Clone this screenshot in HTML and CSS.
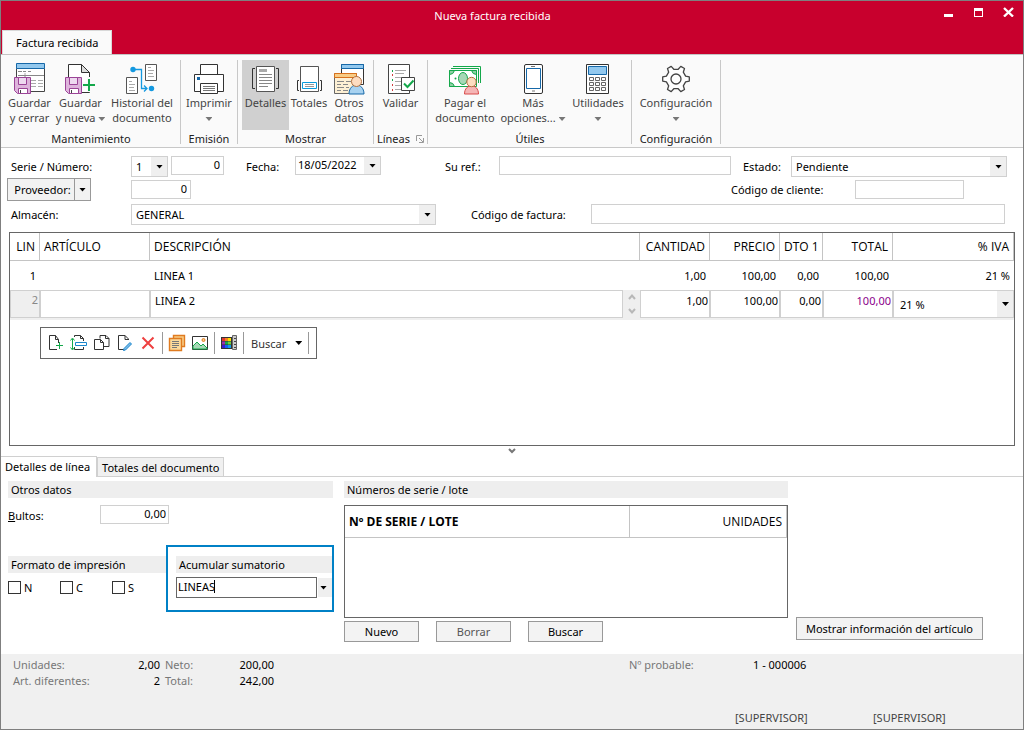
FILE: index.html
```html
<!DOCTYPE html>
<html lang="es">
<head>
<meta charset="utf-8">
<title>Nueva factura recibida</title>
<link rel="stylesheet" href="styles.css">
</head>
<body>
<div class="window">
  <header class="titlebar">
    <h1 class="title">Nueva factura recibida</h1>
    <div class="controls">
      <button class="ctl" aria-label="Minimizar"><svg width="11" height="11" viewBox="0 0 11 11"><path d="M1 8h9v3H1z" fill="#fff"/></svg></button>
      <button class="ctl" aria-label="Maximizar"><svg width="11" height="11" viewBox="0 0 11 11"><path d="M1 2h9v9H1zM2 5v5h7V5z" fill="#fff" fill-rule="evenodd"/></svg></button>
      <button class="ctl" aria-label="Cerrar"><svg width="11" height="11" viewBox="0 0 11 11"><path d="M1 2l9 8.500M10 2l-9 8.500" stroke="#fff" stroke-width="2.400"/></svg></button>
    </div>
    <button class="ribbon-tab">Factura recibida</button>
  </header>

  <nav class="ribbon">
    <section class="group g-save">
      <div class="tools">
        <button class="tool"><svg class="ico" viewBox="0 0 32 32"><path d="M3.500 5.500h28v23h-28z" fill="#fff" stroke="#444"/><path d="M3.500.500h28v5h-28z" fill="#92c8ee" stroke="#1668a8"/><path d="M5 8.500h4m1 0h3m2 0h3M5 12.500h26M12 12v5" stroke="#888"/><path d="M18 17.500h5m2 0h5M18 20.500h5m2 0h5M18 23.500h5m2 0h5M12 10v2" stroke="#aaa"/><path d="M1.500 14.500h16v16h-13l-3-3z" fill="#deb4dc" stroke="#9b4497"/><path d="M5.500 14.500h8v7h-8z" fill="#eedaf0" stroke="#9b4497"/><path d="M5.500 25.500h9v5h-9z" fill="#fff" stroke="#9b4497"/><path d="M7.500 27v3" stroke="#444"/></svg><span>Guardar<br>y cerrar</span></button>
        <button class="tool"><svg class="ico" viewBox="0 0 32 32"><path d="M4.500 1.500h13l8 8v20h-21z" fill="#fff" stroke="#333"/><path d="M17.500 1.500v8h8z" fill="#ddd" stroke="#333"/><path d="M1.500 14.500h16v16h-13l-3-3z" fill="#deb4dc" stroke="#9b4497"/><path d="M5.500 14.500h8v7h-8z" fill="#eedaf0" stroke="#9b4497"/><path d="M5.500 25.500h9v5h-9z" fill="#fff" stroke="#9b4497"/><path d="M7.500 27v3" stroke="#444"/><path d="M18 19h5v-5h4v5h5v6h-5v4h-4v-4h-5z" fill="#fafafa"/><path d="M19 22h12M25 16v12" stroke="#14a84b" stroke-width="2"/></svg><span>Guardar<br>y nueva <i class="caret"></i></span></button>
        <button class="tool wide"><svg class="ico" viewBox="0 0 32 32"><path d="M19.500 1.500h11v16h-11zM.500 14.500h11v16H.500z" fill="#fff" stroke="#555"/><path d="M22 4.500h3m-3 3h6m-6 3h5m-5 3h6M3 18.500h3m-3 3h6m-6 3h5m-5 3h6" stroke="#aaa"/><path d="M7 6.500h8.500v19H21M18 22.500l3 3-3 3" fill="none" stroke="#1499e0" stroke-width="1.300"/><circle cx="7" cy="6.500" r="2.700" fill="#1499e0"/><circle cx="25.500" cy="25.500" r="2.700" fill="#1499e0"/></svg><span>Historial del<br>documento</span></button>
      </div>
      <h2 class="group-name">Mantenimiento</h2>
    </section>
    <section class="group g-print">
      <div class="tools">
        <button class="tool"><svg class="ico" viewBox="0 0 32 32"><path d="M7.500 1.500h17v10h-17z" fill="#fff" stroke="#333"/><path d="M1.500 11.500h29v17h-29z" fill="#fff" stroke="#333"/><path d="M4 14h3v3H4z" fill="#1668a8"/><path d="M7.500 20.500h17v10h-17z" fill="#fff" stroke="#333"/><path d="M10 23.500h12m-12 2h12m-12 2h12" stroke="#777"/></svg><span>Imprimir<br><i class="caret"></i></span></button>
      </div>
      <h2 class="group-name">Emisión</h2>
    </section>
    <section class="group g-show">
      <div class="tools">
        <button class="tool active"><svg class="ico" viewBox="0 0 32 32"><path d="M6 5.500H3.500v20H6M27 5.500h2.500v20H27" fill="none" stroke="#333"/><path d="M7.500 3.500h18v25h-18z" fill="#fff" stroke="#555"/><path d="M10 6h8v3h-8z" fill="#aaa"/><path d="M10 11.500h13m-13 3h13m-13 3h13m-13 3h13m-13 3h9" stroke="#888"/></svg><span>Detalles</span></button>
        <button class="tool"><svg class="ico" viewBox="0 0 32 32"><path d="M6 17.500H4.500v10H6M27 17.500h1.500v10H27" fill="none" stroke="#333"/><path d="M7.500 3.500h18v25h-18z" fill="#fff" stroke="#555"/><path d="M9.500 19.500h14v6h-14z" fill="#fff" stroke="#0a9bdc"/><path d="M12 21.500h9m-9 2h9" stroke="#999"/></svg><span>Totales</span></button>
        <button class="tool"><svg class="ico" viewBox="0 0 32 32"><path d="M8.500 1.500h22v20h-22z" fill="#fff" stroke="#333"/><path d="M8.500 1.500h22v4h-22z" fill="#92c8ee" stroke="#1668a8"/><path d="M1.500 10.500h22v20h-22z" fill="#fdf0d4" stroke="#666"/><path d="M1.500 10.500h22v4h-22z" fill="#f8cc85" stroke="#d8711c"/><path d="M4 18.500h7m2 0h5m-14 3h4m2 0h5m-11 3h7m2 0h3m-12 3h4m2 0h5" stroke="#888"/><path d="M16 31c0-12 15-12 15 0z" fill="#a8d2f0" stroke="#1668a8"/><circle cx="23.500" cy="18.500" r="5" fill="#fddcc0" stroke="#b07040"/></svg><span>Otros<br>datos</span></button>
      </div>
      <h2 class="group-name">Mostrar</h2>
    </section>
    <section class="group g-lines">
      <div class="tools">
        <button class="tool"><svg class="ico" viewBox="0 0 32 32"><path d="M4.500 1.500h21v29h-21z" fill="#fff" stroke="#444"/><path d="M11 7.500h11m-11 3h9m-9 4h11m-11 4h6m-6 4h6m-6 4h6" stroke="#aaa"/><path d="M8.500 7v2m0 7v2" stroke="#14a84b"/><path d="M8.500 11v2m0 8v2m0 3v2" stroke="#d04040"/><path d="M17.500 14.500h13v13h-13z" fill="#fff" stroke="#444"/><path d="M20 20.500l3.500 3.500 6-6.500" fill="none" stroke="#14a84b" stroke-width="2"/></svg><span>Validar</span></button>
      </div>
      <h2 class="group-name">Líneas <svg class="launcher" width="8" height="8" viewBox="0 0 8 8"><path d="M.500 6V.500H6M3 3l4 4M7.500 3v4.500H3" fill="none" stroke="#999"/></svg></h2>
    </section>
    <section class="group g-utils">
      <div class="tools">
        <button class="tool pay"><svg class="ico" viewBox="0 0 32 32"><path d="M4 3.500h27.500V20M2 5.500h27.500V20" fill="none" stroke="#14a84b"/><path d="M.500 7.500h27v16H.500z" fill="#fff" stroke="#14a84b"/><path d="M.500 7.500h5q-1 4-5 4zM27.500 7.500h-5q1 4 5 4zM.500 23.500h5q-1-4-5-4z" fill="#8fd0a5" stroke="#14a84b"/><ellipse cx="14" cy="15.500" rx="4.500" ry="6" fill="#a6d8b6" stroke="#14a84b"/><circle cx="6.500" cy="15.500" r="1" fill="#14a84b"/><path d="M15.500 31c0-11 14-11 14 0z" fill="#f5b5b5" stroke="#d84a4a"/><circle cx="22.500" cy="19" r="4.700" fill="#fddcc0" stroke="#b07040"/></svg><span>Pagar el<br>documento</span></button>
        <button class="tool more"><svg class="ico" viewBox="0 0 32 32"><rect x="7.500" y="1.500" width="18" height="29" rx="1.500" fill="#fff" stroke="#333"/><path d="M9.500 5.500h14v20h-14z" fill="#fff" stroke="#1668a8"/><path d="M14 3.500h4m-3 24.500h3" stroke="#777"/></svg><span>Más<br>opciones... <i class="caret"></i></span></button>
        <button class="tool utils"><svg class="ico" viewBox="0 0 32 32"><path d="M4.500 1.500h22v29h-22z" fill="#fff" stroke="#333"/><path d="M6.500 3.500h18v8h-18z" fill="#92c8ee" stroke="#1668a8"/><path d="M7.500 14.500h4v3h-4zm6 0h4v3h-4zm6 0h4v3h-4zm-12 5h4v3h-4zm6 0h4v3h-4zm6 0h4v3h-4zm-12 5h4v3h-4zm6 0h4v3h-4zm6 0h4v3h-4z" fill="#fff" stroke="#666"/></svg><span>Utilidades<br><i class="caret"></i></span></button>
      </div>
      <h2 class="group-name">Útiles</h2>
    </section>
    <section class="group g-config">
      <div class="tools">
        <button class="tool"><svg class="ico" viewBox="0 0 32 32"><path d="M25.600 13.100l3.700.8v4.200l-3.700.8-2.300 3.900 1.200 3.700-3.700 2.100-2.600-2.900h-4.400l-2.600 2.900-3.700-2.100 1.200-3.700-2.300-3.900-3.700-.8v-4.200l3.700-.8 2.300-3.900-1.200-3.700 3.700-2.100 2.600 2.900h4.400l2.600-2.900 3.700 2.100-1.200 3.700z" fill="#fff" stroke="#444" stroke-width="1.300" stroke-linejoin="round"/><circle cx="16" cy="16" r="5" fill="#fff" stroke="#444" stroke-width="1.300"/></svg><span>Configuración<br><i class="caret"></i></span></button>
      </div>
      <h2 class="group-name">Configuración</h2>
    </section>
  </nav>

  <form class="form">
    <div class="row">
      <label class="lead" for="serie">Serie / Número:</label>
      <span class="combo serie"><select id="serie"><option>1</option></select></span>
      <input class="num numero" aria-label="Número" value="0">
      <label class="l-fecha" for="fecha">Fecha:</label>
      <span class="combo fecha"><input id="fecha" value="18/05/2022"></span>
      <label class="l-ref" for="ref">Su ref.:</label>
      <input class="ref" id="ref">
      <label class="l-estado" for="estado">Estado:</label>
      <span class="combo estado"><select id="estado"><option>Pendiente</option></select></span>
    </div>
    <div class="row mid">
      <div class="split"><button type="button" class="split-main">Proveedor:</button><button type="button" class="split-arrow" aria-label="Opciones de proveedor"><i class="caret dark"></i></button></div>
      <input class="num proveedor" aria-label="Proveedor" value="0">
      <label class="l-cliente" for="cliente">Código de cliente:</label>
      <input class="cliente" id="cliente">
    </div>
    <div class="row">
      <label class="lead" for="almacen">Almacén:</label>
      <span class="combo almacen"><select id="almacen"><option>GENERAL</option></select></span>
      <label class="l-factura" for="factura">Código de factura:</label>
      <input class="factura" id="factura">
    </div>
  </form>

  <main class="grid">
    <table class="lines">
      <colgroup><col class="c-lin"><col class="c-art"><col><col class="c-num"><col class="c-num"><col class="c-dto"><col class="c-num"><col class="c-iva"></colgroup>
      <thead><tr><th class="r">LIN</th><th>ARTÍCULO</th><th>DESCRIPCIÓN</th><th class="r">CANTIDAD</th><th class="r">PRECIO</th><th class="r">DTO 1</th><th class="r">TOTAL</th><th class="r">% IVA</th></tr></thead>
      <tbody>
        <tr><td class="r">1</td><td></td><td>LINEA 1</td><td class="r">1,00</td><td class="r">100,00</td><td class="r">0,00</td><td class="r">100,00</td><td class="r">21 %</td></tr>
        <tr class="editing">
          <td><div class="rownum">2</div></td>
          <td><input aria-label="Artículo"></td>
          <td><div class="desc"><input aria-label="Descripción" value="LINEA 2"><span class="spin"><svg width="8" height="22" viewBox="0 0 8 22"><path d="M1 6l3-3.500L7 6M1 16l3 3.500L7 16" fill="none" stroke="#b8b8b8" stroke-width="2"/></svg></span></div></td>
          <td><input class="num" aria-label="Cantidad" value="1,00"></td>
          <td><input class="num" aria-label="Precio" value="100,00"></td>
          <td><input class="num" aria-label="Descuento" value="0,00"></td>
          <td><input class="num total" aria-label="Total" value="100,00"></td>
          <td><span class="combo iva"><select aria-label="IVA"><option>21 %</option></select></span></td>
        </tr>
      </tbody>
    </table>
    <div class="toolbar">
      <button aria-label="Nueva línea"><svg width="18" height="18" viewBox="0 0 18 18"><path d="M11.500 9V5.500L8.500 1.500h-6v14H10M8.500 1.500v4h3" fill="none" stroke="#333"/><path d="M9 11.500h7M12.500 8v7" stroke="#14a84b"/></svg></button>
      <button aria-label="Insertar línea"><svg width="18" height="18" viewBox="0 0 18 18"><path d="M4.500 3V1.500h6l3 3V7M10.500 1.500v3h3M4.500 13v2.500h9V13" fill="none" stroke="#333"/><path d="M5.500 8.500h11v3h-11z" fill="#fff" stroke="#1a86cc"/><path d="M2.500 5v10M.500 6.500l2-2.500 2 2.500M.500 13.500l2 2.500 2-2.500" fill="none" stroke="#14a84b"/></svg></button>
      <button aria-label="Duplicar"><svg width="18" height="18" viewBox="0 0 18 18"><path d="M7 4.500V1.500h6l3 3v8H11M12.500 1.500v3H16M1.500 5.500h6l3 3v7h-9zM7.500 5.500v3h3" fill="none" stroke="#333"/></svg></button>
      <button aria-label="Modificar"><svg width="18" height="18" viewBox="0 0 18 18"><path d="M12.500 6V5L9 1.500H2.500v14H8M9 1.500v4h3.500" fill="none" stroke="#333"/><path d="M8 14.500l6-6 1.500 1.500-6 6-2 .500z" fill="#7dbbe8" stroke="#1a86cc"/></svg></button>
      <button aria-label="Eliminar"><svg width="18" height="18" viewBox="0 0 18 18"><path d="M3.500 3.500l11 11M14.500 3.500l-11 11" stroke="#ee4040" stroke-width="2"/></svg></button>
      <i class="bar"></i>
      <button aria-label="Notas"><svg width="18" height="18" viewBox="0 0 18 18"><path d="M5.500 1.500h11v11h-11z" fill="#f8cc85" stroke="#e07b20" stroke-width="1.400"/><path d="M1.500 4.500h12v12h-12z" fill="#fbd99b" stroke="#e07b20" stroke-width="1.400"/><path d="M4 7.500h7m-7 2h7m-7 2h7m-7 2h5" stroke="#777"/></svg></button>
      <button aria-label="Imagen"><svg width="18" height="18" viewBox="0 0 18 18"><path d="M1.500 2.500h15v13h-15z" fill="#fff" stroke="#333"/><path d="M2 12l4-4 4 4 2-2 4 4v1H2z" fill="#a6d8b6" stroke="#14a84b"/><circle cx="12.500" cy="6" r="1.500" fill="#f8cc85" stroke="#e07b20"/></svg></button>
      <i class="bar"></i>
      <button aria-label="Tallas y colores"><svg width="18" height="18" viewBox="0 0 18 18"><path d="M1 3h11v12H1z" fill="#333"/><path d="M2 4h3v3H2z" fill="#e3342f"/><path d="M5 4h3v3H5z" fill="#f58220"/><path d="M8 4h3v3H8z" fill="#fde000"/><path d="M2 7.500h3v3H2z" fill="#9b2fae"/><path d="M5 7.500h3v3H5z" fill="#14a84b"/><path d="M8 7.500h3v3H8z" fill="#70d040"/><path d="M2 11h3v3H2z" fill="#3b1ad0"/><path d="M5 11h3v3H5z" fill="#1560f0"/><path d="M8 11h3v3H8z" fill="#10a0e8"/><path d="M12.500 1.500h4v14h-4z" fill="#ccc" stroke="#666"/><path d="M14 4.500h2m-2 3h2m-2 3h2m-2 3h2" stroke="#444"/></svg></button>
      <i class="bar"></i>
      <button class="find">Buscar <i class="caret dark"></i></button>
      <i class="bar"></i>
    </div>
  </main>

  <div class="splitter"><svg width="8" height="6" viewBox="0 0 8 6"><path d="M1 1l3 3 3-3" fill="none" stroke="#777" stroke-width="2"/></svg></div>

  <nav class="tabs">
    <button class="tab on">Detalles de línea</button>
    <button class="tab">Totales del documento</button>
  </nav>

  <section class="details">
    <div class="col-data">
      <h3 class="band">Otros datos</h3>
      <div class="bultos"><label for="bultos"><u>B</u>ultos:</label><input class="num" id="bultos" value="0,00"></div>
      <div class="pair">
        <div class="format">
          <h3 class="band">Formato de impresión</h3>
          <div class="checks">
            <label><input type="checkbox">N</label>
            <label><input type="checkbox">C</label>
            <label><input type="checkbox">S</label>
          </div>
        </div>
        <div class="accum">
          <h3 class="band">Acumular sumatorio</h3>
          <div class="combo sum"><input aria-label="Acumular sumatorio" value="LINEAS"><i class="cursor"></i></div>
        </div>
      </div>
    </div>
    <div class="col-serial">
      <h3 class="band">Números de serie / lote</h3>
      <div class="serials"><table><thead><tr><th>Nº DE SERIE / LOTE</th><th class="units">UNIDADES</th></tr></thead></table></div>
      <div class="actions"><button class="btn">Nuevo</button><button class="btn" disabled>Borrar</button><button class="btn">Buscar</button></div>
    </div>
    <button class="btn info">Mostrar información del artículo</button>
  </section>

  <footer class="status">
    <dl class="sums">
      <dt>Unidades:</dt><dd>2,00</dd><dt>Neto:</dt><dd>200,00</dd>
      <dt>Art. diferentes:</dt><dd>2</dd><dt>Total:</dt><dd>242,00</dd>
    </dl>
    <div class="right">
      <p class="probable"><span>Nº probable:</span><b>1 - 000006</b></p>
      <p class="users"><span>[SUPERVISOR]</span><span>[SUPERVISOR]</span></p>
    </div>
  </footer>
</div>
</body>
</html>
```

FILE: styles.css
```css
* { box-sizing: border-box; }
body { margin: 0; font: 11px/15px "Noto Sans", "Open Sans", sans-serif; color: #000; background: #fff; }
button, input, select { font: inherit; color: inherit; margin: 0; padding: 0; border-radius: 0; }
button { background: none; border: 0; }
h1, h2, h3, p, dl, dd { margin: 0; font-size: inherit; font-weight: normal; }
svg { display: block; flex: none; }

.window { display: flex; flex-direction: column; min-height: 100vh; border: 1px solid #7f7f7f; }

.titlebar { display: grid; grid-template-columns: 1fr auto 1fr; background: #c8002d; color: #fff; }
.title { grid-column: 2; padding-right: 39px; line-height: 29px; }
.controls { display: flex; justify-content: flex-end; gap: 19px; padding: 5px 9px 0 0; height: 29px; }
.ctl { height: 11px; width: 11px; }
.ribbon-tab { grid-column: 1; justify-self: start; height: 24px; padding: 0 13px; margin-left: 1px; background: #fafafa; color: #000; border: 1px solid #d8d8d8; border-bottom: 0; }

.ribbon { display: flex; height: 94px; padding: 5px 0 3px; background: #fafafa; border-top: 1px solid #c4c4c4; border-bottom: 1px solid #c8c8c8; }
.group { display: flex; flex-direction: column; justify-content: space-between; border-right: 1px solid #c8c8c8; }
.tools { display: flex; }
.tool { display: flex; flex-direction: column; align-items: center; height: 70px; padding-top: 3px; color: #444; white-space: nowrap; flex: 1; }
.tool.active { background: #d0d0d0; }
.ico { width: 32px; height: 32px; margin-right: 1px; }
.group-name { text-align: center; line-height: 10px; color: #222; }
.g-save { width: 180px; padding: 0 2px 0 3px; }
.g-save .tool { flex: 0 0 51px; }
.g-save .tool.wide { flex: 1; }
.g-print { width: 57px; }
.g-show { width: 136px; padding: 0 4px; }
.g-show .active { flex: 0 0 47px; }
.g-lines { width: 54px; }
.g-lines .group-name { display: flex; align-items: center; justify-content: center; gap: 6px; }
.g-utils { width: 204px; padding: 0 3px 0 4px; }
.pay { flex: 0 0 66px; }
.more { flex: 0 0 70px; }
.g-config { width: 89px; }
.caret { display: inline-block; width: 7px; height: 4px; margin-bottom: 1px; background: #777; clip-path: polygon(0 0, 100% 0, 50% 100%); }
.caret.dark { background: #000; margin: 0; }

.form { padding: 8px 16px 7px 6px; }
.row { display: flex; align-items: flex-start; }
.row label { line-height: 21px; flex: none; }
.row input { height: 19px; border: 1px solid #d0d0d0; padding: 0 3px 2px; min-width: 0; }
.row.mid { align-items: center; margin: 1px 0 3px; }
.lead { width: 124px; padding-left: 4px; }
.num { text-align: right; }
.combo { position: relative; display: block; }
.combo select, .combo input { appearance: none; width: 100%; height: 21px; background: #fff; border: 1px solid #d0d0d0; padding: 0 18px 0 4px; outline: 0; }
.combo::before { content: ""; position: absolute; top: 1px; right: 1px; bottom: 1px; width: 16px; background: #efefef; pointer-events: none; }
.combo::after { content: ""; position: absolute; top: calc(50% - 2px); right: 5px; width: 7px; height: 4px; background: #000; clip-path: polygon(0 0, 100% 0, 50% 100%); pointer-events: none; }
.serie { width: 37px; }
.numero { width: 53px; margin-left: 3px; }
.l-fecha { width: 71px; padding-left: 22px; }
.fecha { width: 86px; }
.row .fecha input { display: block; height: 19px; padding: 0 0 2px 2px; }
.l-ref { width: 118px; padding-left: 64px; }
.ref { flex: 1 1 232px; }
.l-estado { width: 60px; padding-left: 12px; }
.estado { flex: 1 1 216px; }
.split { display: flex; width: 84px; height: 23px; margin-right: 40px; border: 1px solid #999; background: #f2f2f2; }
.split-main { flex: 1; padding-left: 3px; }
.split-arrow { width: 16px; border-left: 1px solid #999; display: grid; place-items: center; }
.proveedor { width: 60px; }
.l-cliente { margin-left: auto; width: 124px; }
.cliente { width: 109px; margin-right: 43px; }
.almacen { flex: 1 1 305px; }
.l-factura { width: 155px; padding-left: 35px; }
.row .factura { flex: 1 1 414px; height: 20px; margin-right: 2px; }

.grid { flex: 1; margin: 0 8px; border: 1px solid #666; }
.lines { width: 100%; border-collapse: separate; border-spacing: 0; table-layout: fixed; }
.c-lin { width: 30px; } .c-art { width: 110px; } .c-num { width: 70px; } .c-dto { width: 43px; } .c-iva { width: 121px; }
.lines th { height: 28px; padding: 0 4px; text-align: left; white-space: nowrap; font: 12px/15px "Open Sans", "Noto Sans", sans-serif; border-right: 1px solid #c4c4c4; border-bottom: 1px solid #c4c4c4; }
.lines td { height: 29px; padding: 0 4px; }
.lines th.r, .lines td.r { text-align: right; }
.editing { background: #efefef; }
.lines .editing td { padding: 0; height: 30px; vertical-align: top; }
.editing input, .rownum { display: block; width: 100%; height: 28px; border: 1px solid #d0d0d0; background: #fff; padding: 0 1px 8px 4px; }
.rownum { background: #efefef; color: #888; text-align: right; padding-top: 1px; }
.editing .total { color: #8b008b; }
.desc { display: flex; }
.spin { display: grid; place-items: center; width: 17px; flex: none; }
.iva select { height: 28px; padding-left: 6px; }
.toolbar { display: inline-flex; align-items: center; gap: 5px; height: 32px; margin: 7px 30px; padding: 0 7px 0 6px; border: 1px solid #666; vertical-align: top; }
.bar { width: 1px; height: 22px; background: #999; }
.toolbar .find { display: flex; align-items: center; gap: 9px; padding: 0 1px 0 2px; color: #333; }

.splitter { display: grid; justify-content: center; align-content: center; height: 10px; }
.tabs { display: flex; align-items: flex-end; border-bottom: 1px solid #d0d0d0; }
.tab { height: 19px; padding: 0 4px; background: #f0f0f0; border: 1px solid #d0d0d0; border-bottom: 0; white-space: nowrap; }
.tab.on { height: 21px; margin-bottom: -1px; background: #fff; border-left: 0; padding: 0 6px 2px 4px; }

.details { display: flex; padding: 4px 0 12px 7px; }
.band { height: 17px; line-height: 17px; padding: 0 3px; background: #eee; }
.col-data { width: 325px; margin-right: 11px; }
.bultos { display: flex; margin: 7px 0 18px; }
.bultos label { width: 92px; line-height: 22px; }
.bultos input { width: 69px; height: 19px; border: 1px solid #d0d0d0; padding: 0 2px 2px; }
.pair { display: flex; margin-right: -1px; }
.format { flex: 1; padding-top: 11px; }
.checks { display: grid; grid-template-columns: 52px 52px 1fr; padding-top: 8px; }
.checks label { display: flex; align-items: center; gap: 3px; height: 13px; }
.checks input { appearance: none; width: 13px; height: 13px; border: 1px solid #333; background: #fff; }
.accum { width: 168px; height: 67px; border: 2px solid #0081c6; padding: 9px 0 0 8px; }
.sum { margin-top: 4px; }
.combo.sum input { display: block; width: calc(100% - 15px); height: 21px; padding: 0 0 3px 1px; border-color: #666; }
.sum::before { right: 0; width: 14px; }
.cursor { position: absolute; left: 38px; top: 3px; width: 1px; height: 13px; background: #000; }
.col-serial { width: 444px; margin-right: 8px; }
.serials { height: 113px; margin: 7px 0 3px; border: 1px solid #666; }
.serials table { width: 100%; border-collapse: separate; border-spacing: 0; }
.serials th { height: 32px; padding: 0 4px; border-right: 1px solid #c4c4c4; border-bottom: 1px solid #c4c4c4; text-align: left; font: bold 12px/15px "Open Sans", "Noto Sans", sans-serif; }
.serials .units { width: 157px; text-align: right; font-weight: normal; }
.actions { display: flex; gap: 17px; }
.btn { height: 21px; width: 75px; border: 1px solid #999; background: #f3f3f3; }
.btn:disabled { color: #555; }
.btn.info { width: 187px; height: 23px; align-self: flex-end; margin-bottom: 2px; white-space: nowrap; }

.status { display: flex; justify-content: space-between; height: 75px; padding: 3px 61px 4px 12px; background: #f0f0f0; }
.sums { display: grid; grid-template-columns: 97px 50px 50px 64px; line-height: 16px; align-content: start; }
.sums dt { color: #777; }
.sums dd { text-align: right; }
.sums dt:nth-of-type(even) { padding-left: 5px; }
.right { display: flex; flex-direction: column; justify-content: space-between; width: 333px; }
.probable { display: flex; color: #777; line-height: 16px; }
.probable span { width: 124px; }
.probable b { font-weight: normal; color: #000; }
.users { display: grid; grid-template-columns: 138px auto; justify-content: start; padding-left: 106px; color: #444; }
```
